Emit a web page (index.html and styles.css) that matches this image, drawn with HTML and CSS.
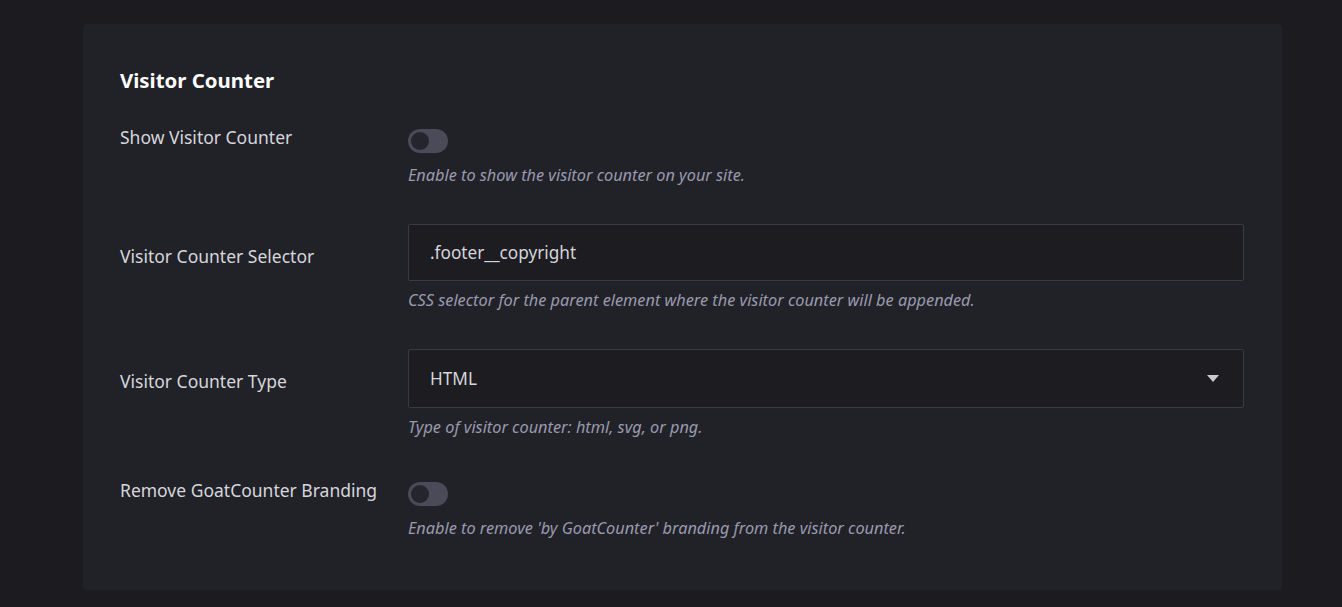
FILE: index.html
```html
<!DOCTYPE html>
<html lang="en">
<head>
<meta charset="utf-8">
<title>Visitor Counter</title>
<link rel="stylesheet" href="styles.css">
</head>
<body>
<main class="page">
  <section class="card">
    <h2 class="card-title">Visitor Counter</h2>

    <div class="row">
      <label class="row-label row-label--toggle">Show Visitor Counter</label>
      <div class="row-control">
        <span class="toggle"><span class="toggle-knob"></span></span>
        <p class="hint">Enable to show the visitor counter on your site.</p>
      </div>
    </div>

    <div class="row row--field row--selector">
      <label class="row-label row-label--field">Visitor Counter Selector</label>
      <div class="row-control">
        <div class="field">.footer__copyright</div>
        <p class="hint">CSS selector for the parent element where the visitor counter will be appended.</p>
      </div>
    </div>

    <div class="row row--field row--type">
      <label class="row-label row-label--field">Visitor Counter Type</label>
      <div class="row-control">
        <div class="field field--select">
          <span>HTML</span>
          <svg class="caret" width="12" height="8" viewBox="0 0 12 8"><path d="M0 0 L12 0 L6 7 Z" fill="#c9c9cf"/></svg>
        </div>
        <p class="hint">Type of visitor counter: html, svg, or png.</p>
      </div>
    </div>

    <div class="row">
      <label class="row-label row-label--toggle">Remove GoatCounter Branding</label>
      <div class="row-control">
        <span class="toggle"><span class="toggle-knob"></span></span>
        <p class="hint">Enable to remove 'by GoatCounter' branding from the visitor counter.</p>
      </div>
    </div>
  </section>
</main>
</body>
</html>
```

FILE: styles.css
```css
* { box-sizing: border-box; }

html, body {
  margin: 0;
  padding: 0;
  background: #1b1b20;
}

body {
  font-family: "Noto Sans", "Open Sans", sans-serif;
  color: #d6d6dc;
}

.page {
  padding: 24px 60px 0 83px;
}

.card {
  width: 1199px;
  background: #212128;
  border-radius: 4px;
  padding: 42px 38px 51px 37px;
}

.card-title {
  margin: 0 0 31px;
  font-size: 20.4px;
  line-height: 28px;
  font-weight: 700;
  color: #ffffff;
}

.row {
  display: flex;
  align-items: flex-start;
  margin-bottom: 39px;
}

.row:first-of-type + .row--field { margin-top: -1px; }

.row--selector { margin-bottom: 38px; }

.row--type { margin-bottom: 40px; }

.row:last-child { margin-bottom: 0; }

.row-label {
  flex: 0 0 288px;
  font-size: 17.5px;
  line-height: 24px;
  color: #d6d6dc;
}

.row-label--field { padding-top: 20px; }

.row-control {
  flex: 1;
  display: flex;
  flex-direction: column;
  align-items: flex-start;
}

.toggle {
  display: block;
  margin-top: 4px;
  width: 40px;
  height: 24px;
  border-radius: 12px;
  background: #4a4a58;
  position: relative;
}

.toggle-knob {
  position: absolute;
  left: 3px;
  top: 3px;
  width: 18px;
  height: 18px;
  border-radius: 50%;
  background: #25252d;
}

.toggle + .hint { margin-top: 11px; }

.field {
  width: 100%;
  height: 57px;
  display: flex;
  align-items: center;
  justify-content: space-between;
  padding: 0 24px 0 21px;
  background: #1c1c21;
  border: 1px solid #3a3a43;
  border-radius: 2px;
  font-size: 17.2px;
  color: #d6d6dc;
}

.field--select { height: 59px; }

.field + .hint { margin-top: 8px; }

.hint {
  margin: 0;
  font-size: 16.3px;
  line-height: 22px;
  font-style: italic;
  color: #9a9aae;
}

.caret { display: block; }
```
